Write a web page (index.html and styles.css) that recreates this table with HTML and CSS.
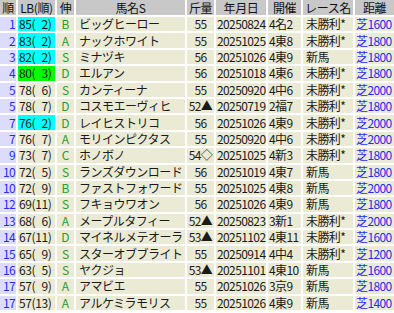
FILE: index.html
```html
<!DOCTYPE html>
<html lang="ja">
<head>
<meta charset="utf-8">
<link rel="stylesheet" href="styles.css">
</head>
<body>
<div class="grid">
  <div class="h">順</div><div class="h">LB(順)</div><div class="h">伸</div><div class="h">馬名S</div><div class="h kin">斤量</div><div class="h">年月日</div><div class="h">開催</div><div class="h">レース名</div><div class="h">距離</div>

  <div class="rk">1</div><div class="lb cy">85( 2)</div><div class="nb">B</div><div class="nm">ビッグヒーロー</div><div class="kg">55</div><div class="dt">20250824</div><div class="kai">4名2</div><div class="rc">未勝利*</div><div class="ds">芝1600</div>
  <div class="rk">2</div><div class="lb cy">83( 2)</div><div class="nb">A</div><div class="nm">ナックホワイト</div><div class="kg">55</div><div class="dt">20251025</div><div class="kai">4東8</div><div class="rc">未勝利*</div><div class="ds">芝1800</div>
  <div class="rk">3</div><div class="lb cy">82( 2)</div><div class="nb">S</div><div class="nm">ミナヅキ</div><div class="kg">56</div><div class="dt">20251026</div><div class="kai">4東9</div><div class="rc">新馬</div><div class="ds">芝1800</div>
  <div class="rk">4</div><div class="lb gr">80( 3)</div><div class="nb">D</div><div class="nm">エルアン</div><div class="kg">56</div><div class="dt">20251018</div><div class="kai">4東6</div><div class="rc">未勝利*</div><div class="ds">芝1800</div>
  <div class="rk">5</div><div class="lb">78( 6)</div><div class="nb">S</div><div class="nm">カンティーナ</div><div class="kg">55</div><div class="dt">20250920</div><div class="kai">4中6</div><div class="rc">未勝利*</div><div class="ds">芝2000</div>
  <div class="rk">5</div><div class="lb">78( 7)</div><div class="nb">D</div><div class="nm">コスモエーヴィヒ</div><div class="kg">52▲</div><div class="dt">20250719</div><div class="kai">2福7</div><div class="rc">未勝利*</div><div class="ds">芝1800</div>
  <div class="rk">7</div><div class="lb cy">76( 2)</div><div class="nb">D</div><div class="nm">レイヒストリコ</div><div class="kg">56</div><div class="dt">20251026</div><div class="kai">4東9</div><div class="rc">未勝利*</div><div class="ds">芝2000</div>
  <div class="rk">7</div><div class="lb">76( 7)</div><div class="nb">A</div><div class="nm">モリインピクタス</div><div class="kg">55</div><div class="dt">20250920</div><div class="kai">4中6</div><div class="rc">未勝利*</div><div class="ds">芝2000</div>
  <div class="rk">9</div><div class="lb">73( 7)</div><div class="nb">C</div><div class="nm">ホノボノ</div><div class="kg">54◇</div><div class="dt">20251025</div><div class="kai">4新3</div><div class="rc">未勝利*</div><div class="ds">芝1800</div>
  <div class="rk">10</div><div class="lb">72( 5)</div><div class="nb">S</div><div class="nm">ランズダウンロード</div><div class="kg">56</div><div class="dt">20251019</div><div class="kai">4東7</div><div class="rc">新馬</div><div class="ds">芝1800</div>
  <div class="rk">10</div><div class="lb">72( 9)</div><div class="nb">B</div><div class="nm">ファストフォワード</div><div class="kg">55</div><div class="dt">20251025</div><div class="kai">4東8</div><div class="rc">新馬</div><div class="ds">芝2000</div>
  <div class="rk">12</div><div class="lb">69(11)</div><div class="nb">S</div><div class="nm">フキョウワオン</div><div class="kg">56</div><div class="dt">20251026</div><div class="kai">4東9</div><div class="rc">新馬</div><div class="ds">芝1800</div>
  <div class="rk">13</div><div class="lb">68( 6)</div><div class="nb">A</div><div class="nm">メープルタフィー</div><div class="kg">52▲</div><div class="dt">20250823</div><div class="kai">3新1</div><div class="rc">未勝利*</div><div class="ds">芝2000</div>
  <div class="rk">14</div><div class="lb">67(11)</div><div class="nb">D</div><div class="nm">マイネルメテオーラ</div><div class="kg">53▲</div><div class="dt">20251102</div><div class="kai">4東11</div><div class="rc">未勝利*</div><div class="ds">芝1600</div>
  <div class="rk">15</div><div class="lb">65( 9)</div><div class="nb">S</div><div class="nm">スターオブブライト</div><div class="kg">55</div><div class="dt">20250914</div><div class="kai">4中4</div><div class="rc">未勝利*</div><div class="ds">芝1200</div>
  <div class="rk">16</div><div class="lb">63( 5)</div><div class="nb">S</div><div class="nm">ヤクジョ</div><div class="kg">53▲</div><div class="dt">20251101</div><div class="kai">4東10</div><div class="rc">新馬</div><div class="ds">芝1600</div>
  <div class="rk">17</div><div class="lb">57( 9)</div><div class="nb">A</div><div class="nm">アマビエ</div><div class="kg">55</div><div class="dt">20251026</div><div class="kai">3京9</div><div class="rc">新馬</div><div class="ds">芝1800</div>
  <div class="rk">17</div><div class="lb">57(13)</div><div class="nb">A</div><div class="nm">アルケミラモリス</div><div class="kg">55</div><div class="dt">20251026</div><div class="kai">4東9</div><div class="rc">新馬</div><div class="ds">芝1400</div>
</div>
</body>
</html>
```

FILE: styles.css
```css
html, body {
  margin: 0;
  padding: 0;
  background: #ffffff;
}
body {
  width: 394px;
  height: 313px;
  overflow: hidden;
  font-family: "Noto Sans CJK JP", "Noto Sans", sans-serif;
  font-size: 12px;
  color: #1a1a1a;
  letter-spacing: -0.6px;
}
.grid {
  display: grid;
  grid-template-columns: 16px 37px 17px 109px 27px 50px 33px 50px 1fr;
  grid-template-rows: 15px repeat(18, 14.4px);
  gap: 2px;
  background: #ffffff;
}
.grid > div {
  background: #ebebd5;
  white-space: pre;
  overflow: visible;
  line-height: 14px;
  min-height: 0;
  display: flex;
  align-items: center;
}
.grid > .h {
  background: #c8c8c8;
  color: #111;
  justify-content: center;
  letter-spacing: -0.4px;
}
.grid > .rk {
  background: #dcdcff;
  color: #2a2aff;
  justify-content: flex-end;
  padding-right: 1px;
}
.grid > .lb {
  padding-left: 1px;
  word-spacing: 4px;
  letter-spacing: -0.4px;
}
.grid > .cy { background: #00ffff; }
.grid > .gr { background: #00ff00; }
.grid > .nb {
  color: #2c9a2c;
  justify-content: center;
  letter-spacing: 0;
}
.grid > .nm {
  padding-left: 3px;
  letter-spacing: -0.5px;
}
.grid > .kg {
  justify-content: center;
}
.grid > .dt {
  padding-left: 1px;
}
.grid > .kai {
  padding-left: 1px;
}
.grid > .rc {
  padding-left: 3px;
}
.grid > .ds {
  color: #2a2aee;
  padding-left: 1px;
}
```
